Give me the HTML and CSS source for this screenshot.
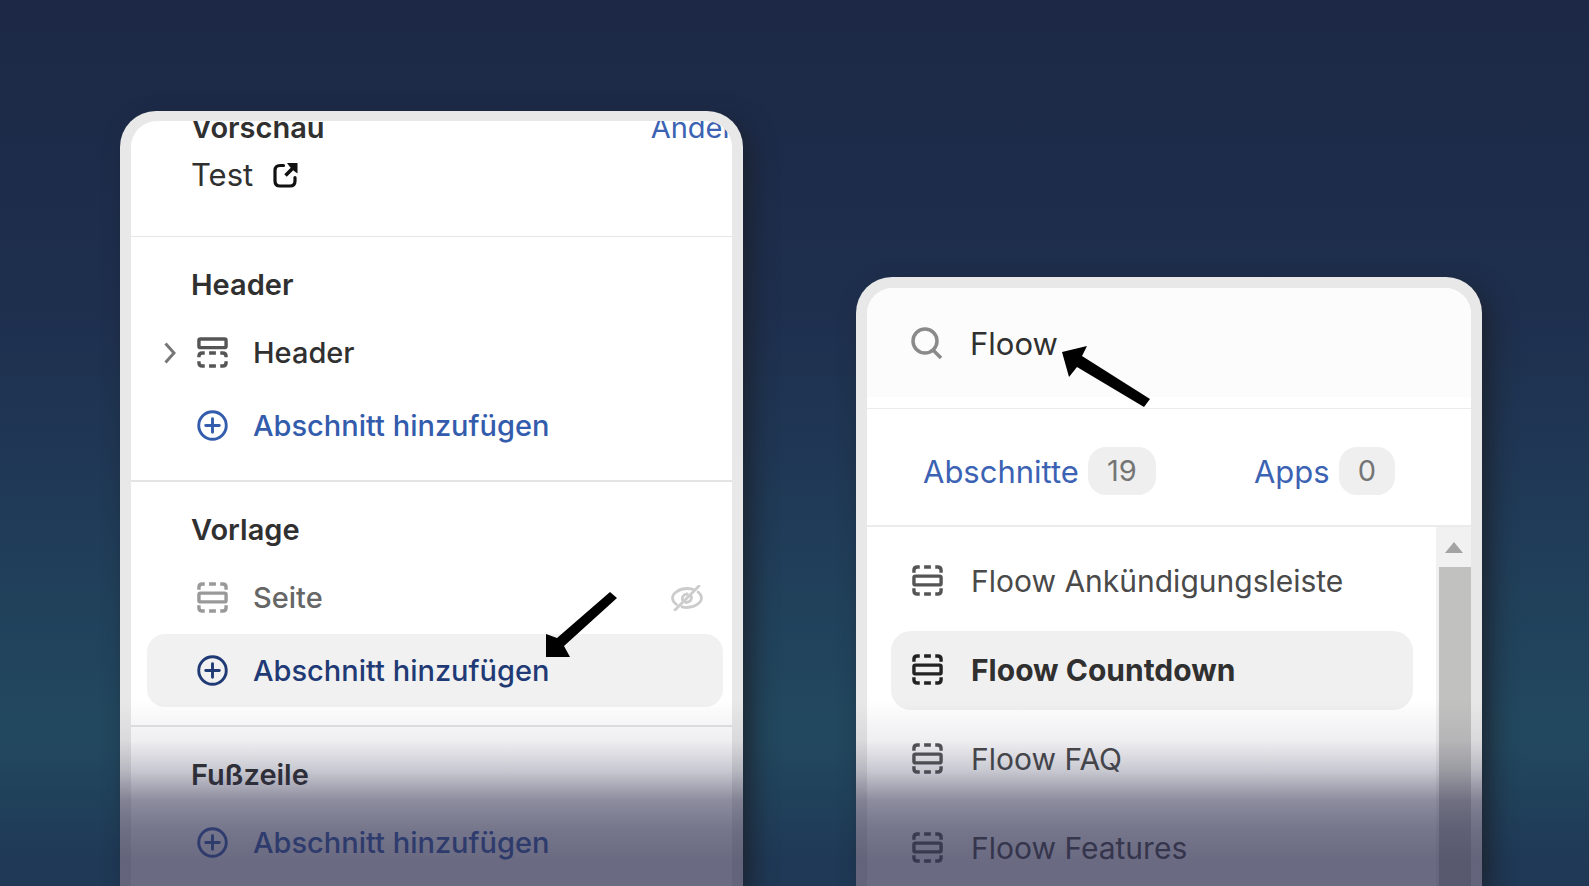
FILE: index.html
```html
<!DOCTYPE html>
<html lang="de">

<head>
    <meta charset="UTF-8">
    <meta name="viewport" content="width=device-width, initial-scale=1.0">
    <title>Abschnitt hinzufügen</title>
    <link rel="stylesheet" href="styles.css">
</head>

<body>
    <!-- shared icons -->
    <svg class="sprite" aria-hidden="true">
        <symbol id="icon-section" viewBox="0 0 32 32">
            <g fill="none" stroke="currentColor" stroke-width="3.5">
                <rect x="2" y="11.5" width="28" height="9" rx="1.5" />
                <path d="M2 8V5.5Q2 2 5.500 2H8M12.500 2h7M24 2h2.500Q30 2 30 5.500V8M2 24v2.500Q2 30 5.500 30H8M12.500 30h7M24 30h2.500q3.500 0 3.500-3.500V24" />
            </g>
        </symbol>
        <symbol id="icon-header" viewBox="0 0 32 32">
            <g fill="none" stroke="currentColor" stroke-width="3.5">
                <rect x="2" y="2" width="28" height="9" rx="1.500" />
                <path d="M2 21v-1q0-3.500 3.500-3.500H8M12.500 16.500h7M24 16.500h2.500Q30 16.500 30 20v1M2 25v1.500Q2 30 5.500 30H8M12.500 30h7M24 30h2.500q3.500 0 3.500-3.500V25" />
            </g>
        </symbol>
        <symbol id="icon-plus" viewBox="0 0 32 32">
            <g fill="none" stroke="currentColor" stroke-width="3">
                <circle cx="16" cy="16" r="14.200" />
                <path d="M16 9v14M9 16h14" stroke-linecap="round" />
            </g>
        </symbol>
    </svg>

    <main class="stage">
        <section class="panel panel-editor">
            <div class="panel-inner">
                <div class="preview">
                    <div class="preview-row">
                        <h2 class="title">Vorschau</h2>
                        <a class="change" href="#">Ändern</a>
                    </div>
                    <a class="preview-row preview-link" href="#">
                        Test
                        <svg class="icon-external" viewBox="0 0 26 26" aria-hidden="true">
                            <path d="M10.500 3.500H7q-5 0-5 5V19q0 5 5 5h10q5 0 5-5v-3.500" fill="none" stroke="currentColor" stroke-width="3.200" stroke-linecap="round" />
                            <path d="M12.500 13.500 20 6" fill="none" stroke="currentColor" stroke-width="3.600" />
                            <path d="M14 1h10.500v10.500L21 9l-4-4z" fill="currentColor" />
                        </svg>
                    </a>
                </div>

                <div class="group">
                    <h2 class="title">Header</h2>
                    <button class="row">
                        <svg class="chevron" viewBox="0 0 12 22" aria-hidden="true">
                            <path d="M1.500 1.500 10 11l-8.500 9.500" fill="none" stroke="currentColor" stroke-width="3" />
                        </svg>
                        <svg class="icon"><use href="#icon-header" /></svg>
                        <span class="label">Header</span>
                    </button>
                    <button class="row add">
                        <svg class="icon"><use href="#icon-plus" /></svg>
                        <span class="label">Abschnitt hinzufügen</span>
                    </button>
                </div>

                <div class="group">
                    <h2 class="title">Vorlage</h2>
                    <button class="row muted">
                        <svg class="icon"><use href="#icon-section" /></svg>
                        <span class="label">Seite</span>
                        <svg class="icon-hidden" viewBox="0 0 32 26" aria-hidden="true">
                            <g fill="none" stroke="currentColor" stroke-width="2.800" stroke-linecap="round">
                                <path d="M5.500 19.500C3 17.500 1.500 15 1.500 13 1.500 8.500 8 3.500 16 3.500q3.500 0 6.500 1M27 7c2.300 1.800 3.500 4 3.500 6 0 4.500-6.500 9.500-14.500 9.500q-2.500 0-5-.700" />
                                <path d="M4 25 28 1M11.500 15q-1-5 4.500-6M20.500 12q0 5-5.500 5.500" />
                            </g>
                        </svg>
                    </button>
                    <button class="row add active">
                        <svg class="icon"><use href="#icon-plus" /></svg>
                        <span class="label">Abschnitt hinzufügen
                            <svg class="arrow arrow-add" viewBox="0 0 71 65" aria-hidden="true">
                                <path d="M0 65V42l11 4L64 0l7 6-53 48 6 11z" />
                            </svg>
                        </span>
                    </button>
                </div>

                <div class="group">
                    <h2 class="title">Fußzeile</h2>
                    <button class="row add">
                        <svg class="icon"><use href="#icon-plus" /></svg>
                        <span class="label">Abschnitt hinzufügen</span>
                    </button>
                </div>
            </div>
        </section>

        <section class="panel panel-picker">
            <div class="panel-inner">
                <div class="search">
                    <svg class="icon-search" viewBox="0 0 32 34" aria-hidden="true">
                        <g fill="none" stroke="currentColor" stroke-width="3.500">
                            <circle cx="14" cy="15" r="12" />
                            <path d="m22 24 8 8" />
                        </g>
                    </svg>
                    <input class="search-input" type="text" value="Floow" aria-label="Abschnitte suchen">
                    <svg class="arrow arrow-search" viewBox="0 0 88 61" aria-hidden="true">
                        <path d="M0 6 25 0l-5 10 68 43-6 8-67-40-8 10z" />
                    </svg>
                </div>

                <div class="tabs">
                    <button class="tab">Abschnitte <span class="badge">19</span></button>
                    <button class="tab">Apps <span class="badge">0</span></button>
                </div>

                <div class="results">
                    <div class="list">
                        <button class="result">
                            <svg class="icon"><use href="#icon-section" /></svg>
                            Floow Ankündigungsleiste
                        </button>
                        <button class="result selected">
                            <svg class="icon"><use href="#icon-section" /></svg>
                            Floow Countdown
                        </button>
                        <button class="result">
                            <svg class="icon"><use href="#icon-section" /></svg>
                            Floow FAQ
                        </button>
                        <button class="result">
                            <svg class="icon"><use href="#icon-section" /></svg>
                            Floow Features
                        </button>
                    </div>
                    <div class="scrollbar">
                        <div class="scroll-up"></div>
                        <div class="thumb"></div>
                    </div>
                </div>
            </div>
        </section>
    </main>
</body>

</html>
```
FILE: styles.css
```css
* {
    box-sizing: border-box;
}

body {
    margin: 0;
    background: #1c2846;
    color: #303030;
    font-family: Inter, "Liberation Sans", sans-serif;
    font-size: 29px;
}

button,
input {
    font: inherit;
    color: inherit;
    border: none;
    background: none;
    padding: 0;
}

button {
    cursor: pointer;
    text-align: left;
}

a {
    color: inherit;
    text-decoration: none;
}

.sprite {
    position: absolute;
    width: 0;
    height: 0;
}

.stage {
    display: grid;
    grid-template-columns: 623fr 626fr;
    gap: 113px;
    height: 100vh;
    padding: 111px 107px 0 120px;
    overflow: hidden;
    background: linear-gradient(#1c2846 0%, #1e2f4e 35%, #203c58 60%, #22485f 81%, #22485f 84%, #1f3956 97%, #1f3956 100%);
}

/* panels */
.panel {
    position: relative;
    display: flex;
    min-width: 0;
    min-height: 0;
    padding: 10px 11px 0;
    border-radius: 36px 36px 0 0;
    background: #e8e8e8;
    box-shadow: 10px 10px 24px rgba(28, 32, 42, 0.8);
}

.panel-picker {
    margin-top: 166px;
    padding-top: 11px;
}

.panel::after {
    content: "";
    position: absolute;
    left: 0;
    right: 0;
    bottom: 0;
    height: 186px;
    background: linear-gradient(rgba(43, 43, 77, 0) 0%, rgba(43, 43, 77, 0.08) 22%, rgba(43, 43, 77, 0.26) 38%, rgba(43, 43, 77, 0.54) 54%, rgba(43, 43, 77, 0.65) 70%, rgba(43, 43, 77, 0.7) 86%);
    pointer-events: none;
}

.panel-inner {
    flex: 1;
    display: flex;
    flex-direction: column;
    min-width: 0;
    border-radius: 26px 26px 0 0;
    background: #fff;
    overflow: hidden;
}

.icon {
    flex: none;
    width: 31px;
    height: 31px;
    color: #555;
}

.arrow {
    position: absolute;
    fill: #000;
}

/* editor */
.title {
    margin: 0;
    font-size: 29px;
    font-weight: 600;
}

.preview {
    margin-top: -17px;
    padding: 0 0 38px 60px;
    border-bottom: 1px solid #e6e6e6;
}

.preview-row {
    display: flex;
    align-items: center;
    justify-content: space-between;
    height: 47px;
}

.preview-link {
    justify-content: flex-start;
    gap: 20px;
    font-size: 31px;
}

.change {
    margin-right: -19px;
    color: #3b62b3;
}

.icon-external {
    width: 26px;
    height: 26px;
    color: #111;
}

.group {
    padding: 30px 9px 18px 16px;
    border-bottom: 2px solid #e4e4e4;
}

.group:last-child {
    border-bottom: none;
}

.group .title {
    padding-left: 44px;
    margin-bottom: 13px;
    line-height: 36px;
}

.row {
    position: relative;
    display: flex;
    align-items: center;
    gap: 25px;
    width: 100%;
    height: 73px;
    padding: 0 20px 0 50px;
    border-radius: 18px;
    font-weight: 500;
}

.chevron {
    position: absolute;
    left: 17px;
    width: 12px;
    height: 22px;
    color: #777;
}

.label {
    position: relative;
}

.add,
.add .icon {
    color: #335cad;
}

.muted {
    color: #666;
}

.muted .icon {
    color: #999;
}

.icon-hidden {
    width: 32px;
    height: 26px;
    margin-left: auto;
    color: #ccc;
}

.active {
    background: #f1f1f1;
}

.active,
.active .icon {
    color: #1f3a75;
}

.arrow-add {
    left: calc(100% - 3px);
    bottom: 31px;
    width: 71px;
    height: 65px;
}

/* picker */
.search {
    position: relative;
    display: flex;
    align-items: center;
    gap: 27px;
    height: 121px;
    padding: 0 44px 10px;
    border-bottom: 1px solid #ebebeb;
    background: linear-gradient(#fcfcfc 109px, #fff 109px);
}

.icon-search {
    flex: none;
    width: 32px;
    height: 34px;
    color: #8a8a8a;
}

.search-input {
    flex: 1;
    min-width: 0;
    font-size: 31px;
    outline: none;
}

.arrow-search {
    left: 195px;
    top: 58px;
    width: 88px;
    height: 61px;
}

.tabs {
    display: flex;
    align-items: center;
    justify-content: space-between;
    height: 118px;
    padding: 8px 76px 0 56px;
    border-bottom: 2px solid #ebebeb;
}

.tab {
    display: flex;
    align-items: center;
    gap: 9px;
    font-size: 31px;
    color: #3b62b3;
}

.badge {
    padding: 0 19px;
    border-radius: 18px;
    background: #efefef;
    color: #757575;
    font-size: 29px;
    line-height: 48px;
}

.results {
    flex: 1;
    display: flex;
    min-height: 0;
}

.list {
    flex: 1;
    display: flex;
    flex-direction: column;
    gap: 10px;
    min-width: 0;
    padding: 15px 23px 0 24px;
}

.result {
    flex: none;
    display: flex;
    align-items: center;
    gap: 28px;
    height: 79px;
    padding: 0 20px 2px 21px;
    border-radius: 20px;
    color: #4a4a4a;
    font-size: 30px;
    white-space: nowrap;
}

.selected {
    background: #f0f0f0;
    color: #303030;
    font-weight: 700;
}

.selected .icon {
    color: #222;
}

.scrollbar {
    display: flex;
    flex-direction: column;
    width: 35px;
    padding-left: 3px;
    background: #f1f1f1;
}

.scroll-up {
    height: 40px;
    padding: 15px 6px;
}

.scroll-up::before {
    content: "";
    display: block;
    border: 9px solid transparent;
    border-top: none;
    border-bottom: 11px solid #a3a3a3;
    width: 0;
}

.thumb {
    flex: 1;
    background: #c1c1c0;
}
```
